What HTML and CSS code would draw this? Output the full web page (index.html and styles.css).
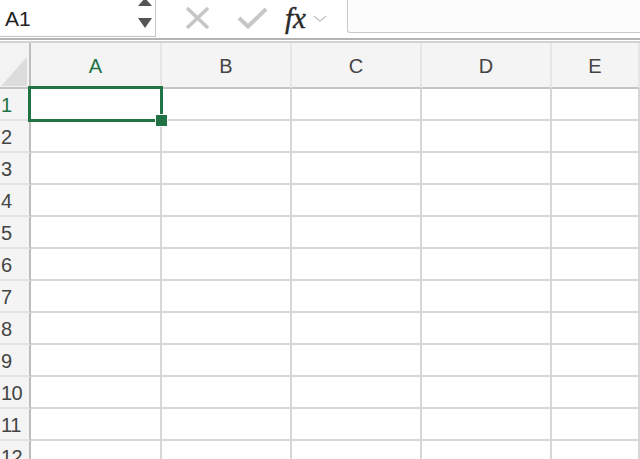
FILE: index.html
```html
<!DOCTYPE html>
<html lang="en">
<head>
    <meta charset="UTF-8">
    <title>Sheet1</title>
    <link rel="stylesheet" href="styles.css">
</head>
<body>

    <div class="formula-bar">
        <div class="name-box">
            <span class="cell-ref">A1</span>
            <svg class="spinner" width="16" height="30" viewBox="0 0 16 30">
                <polygon points="1,6 15,6 8,-2" fill="#555"/>
                <polygon points="1,18 15,18 8,28" fill="#555"/>
            </svg>
        </div>
        <div class="bar-tools">
            <svg class="tool" width="26" height="24" viewBox="0 0 26 24">
                <path d="M2 2 L23 22 M23 2 L2 22" stroke="#c6c6c6" stroke-width="3.5" fill="none"/>
            </svg>
            <svg class="tool" width="32" height="24" viewBox="0 0 32 24">
                <path d="M2 12 L11 20.5 L29 3" stroke="#c6c6c6" stroke-width="4" fill="none"/>
            </svg>
            <span class="fx">fx</span>
            <svg class="chevron" width="14" height="10" viewBox="0 0 14 10">
                <path d="M1 3 L7 8 L13 3" stroke="#c8c8c8" stroke-width="1.5" fill="none"/>
            </svg>
        </div>
        <div class="formula-input"></div>
    </div>

    <div class="sheet">
        <div class="corner">
            <svg width="28" height="31" viewBox="0 0 28 31">
                <polygon points="26,1 26,30 0,30" fill="#dcdcdc"/>
            </svg>
        </div>
        <div class="col-head active">A</div>
        <div class="col-head">B</div>
        <div class="col-head">C</div>
        <div class="col-head">D</div>
        <div class="col-head">E</div>

        <div class="row-head active">1</div>
        <div class="cell selected"><span class="handle"></span></div>
        <div class="cell"></div><div class="cell"></div><div class="cell"></div><div class="cell"></div>

        <div class="row-head">2</div>
        <div class="cell"></div><div class="cell"></div><div class="cell"></div><div class="cell"></div><div class="cell"></div>
        <div class="row-head">3</div>
        <div class="cell"></div><div class="cell"></div><div class="cell"></div><div class="cell"></div><div class="cell"></div>
        <div class="row-head">4</div>
        <div class="cell"></div><div class="cell"></div><div class="cell"></div><div class="cell"></div><div class="cell"></div>
        <div class="row-head">5</div>
        <div class="cell"></div><div class="cell"></div><div class="cell"></div><div class="cell"></div><div class="cell"></div>
        <div class="row-head">6</div>
        <div class="cell"></div><div class="cell"></div><div class="cell"></div><div class="cell"></div><div class="cell"></div>
        <div class="row-head">7</div>
        <div class="cell"></div><div class="cell"></div><div class="cell"></div><div class="cell"></div><div class="cell"></div>
        <div class="row-head">8</div>
        <div class="cell"></div><div class="cell"></div><div class="cell"></div><div class="cell"></div><div class="cell"></div>
        <div class="row-head">9</div>
        <div class="cell"></div><div class="cell"></div><div class="cell"></div><div class="cell"></div><div class="cell"></div>
        <div class="row-head">10</div>
        <div class="cell"></div><div class="cell"></div><div class="cell"></div><div class="cell"></div><div class="cell"></div>
        <div class="row-head">11</div>
        <div class="cell"></div><div class="cell"></div><div class="cell"></div><div class="cell"></div><div class="cell"></div>
        <div class="row-head">12</div>
        <div class="cell"></div><div class="cell"></div><div class="cell"></div><div class="cell"></div><div class="cell"></div>
    </div>

</body>
</html>
```

FILE: styles.css
```css
body {
    margin: 0;
    padding: 0;
    font-family: "Liberation Sans", Arial, sans-serif;
    background-color: white;
    overflow: hidden;
    height: 459px;
}
.formula-bar {
    display: flex;
    height: 40px;
    border-bottom: 2px solid #b4b4b4;
    box-sizing: border-box;
}
.name-box {
    width: 156px;
    height: 37px;
    box-sizing: border-box;
    display: flex;
    align-items: center;
    justify-content: space-between;
    padding-left: 5px;
    padding-right: 2px;
    border-right: 1px solid #c4c4c4;
    border-bottom: 1px solid #c4c4c4;
}
.cell-ref {
    font-size: 21px;
    color: #222;
    padding-top: 2px;
}
.spinner {
    align-self: flex-start;
}
.bar-tools {
    width: 191px;
    display: flex;
    align-items: center;
    height: 36px;
}
.tool {
    margin-left: 29px;
}
.tool + .tool {
    margin-left: 26px;
}
.fx {
    font-family: "Liberation Serif", serif;
    font-style: italic;
    font-size: 29px;
    color: #2a2a2a;
    margin-left: 16px;
    -webkit-text-stroke: 0.4px #2a2a2a;
}
.chevron {
    margin-left: 7px;
}
.formula-input {
    flex: 1;
    height: 33px;
    box-sizing: border-box;
    border-left: 1px solid #c8c8c8;
    border-bottom: 1px solid #c8c8c8;
    border-bottom-left-radius: 3px;
    background-color: #fcfcfc;
}
.sheet {
    display: grid;
    grid-template-columns: 31px 131px 130px 130px 130px 1fr;
    grid-auto-rows: 32px;
    grid-template-rows: 46px;
    margin-top: 1px;
    border-top: 2px solid #d2d2d2;
}
.sheet > div {
    box-sizing: border-box;
}
.corner {
    background-color: #f3f3f3;
    border-right: 2px solid #bdbdbd;
    border-bottom: 2px solid #c4c4c4;
    display: flex;
    align-items: flex-end;
    justify-content: flex-end;
}
.col-head {
    background-color: #f4f4f4;
    border-right: 2px solid #e6e6e6;
    border-bottom: 2px solid #c4c4c4;
    display: flex;
    align-items: center;
    justify-content: center;
    padding-top: 3px;
    font-size: 20px;
    color: #444;
}
.row-head {
    background-color: #f4f4f4;
    border-right: 2px solid #bdbdbd;
    border-bottom: 2px solid #e2e2e2;
    font-size: 20px;
    color: #444;
    padding-left: 1px;
    padding-top: 2px;
    display: flex;
    align-items: center;
    letter-spacing: -0.5px;
}
.active {
    color: #217346;
}
.cell {
    border-right: 2px solid #d6d6d6;
    border-bottom: 2px solid #d6d6d6;
}
.selected {
    position: relative;
}
.selected::before {
    content: "";
    position: absolute;
    left: -3px;
    top: -3px;
    right: -3px;
    bottom: -3px;
    border: 3px solid #217346;
}
.handle {
    position: absolute;
    right: -8px;
    bottom: -8px;
    width: 13px;
    height: 13px;
    background-color: #217346;
    border: 1px solid white;
    box-sizing: border-box;
}
```
